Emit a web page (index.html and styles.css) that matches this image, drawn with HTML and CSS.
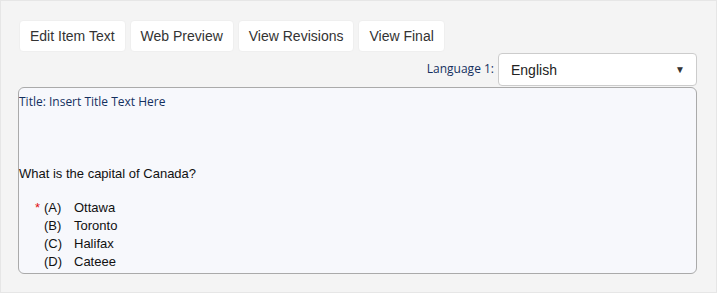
FILE: index.html
```html
<!DOCTYPE html>
<html lang="en">
<head>
    <meta charset="UTF-8">
    <title>Item Editor</title>
    <link rel="stylesheet" href="styles.css">
</head>
<body>
    <div class="page">
        <div class="tabs">
            <button class="tab">Edit Item Text</button>
            <button class="tab">Web Preview</button>
            <button class="tab">View Revisions</button>
            <button class="tab">View Final</button>
        </div>

        <div class="lang-row">
            <span class="lang-label">Language 1:</span>
            <div class="select">
                <span>English</span>
                <span class="arrow">&#9660;</span>
            </div>
        </div>

        <div class="item-box">
            <div class="item-title">Title: Insert Title Text Here</div>
            <div class="question">What is the capital of Canada?</div>
            <div class="options">
                <span class="key">*</span><span class="letter">(A)</span><span>Ottawa</span>
                <span></span><span class="letter">(B)</span><span>Toronto</span>
                <span></span><span class="letter">(C)</span><span>Halifax</span>
                <span></span><span class="letter">(D)</span><span>Cateee</span>
            </div>
        </div>
    </div>
</body>
</html>
```

FILE: styles.css
```css
body {
    margin: 0;
    font-family: 'Liberation Sans', Arial, sans-serif;
    color: #222;
}
.page {
    box-sizing: border-box;
    height: 293px;
    background: #f4f4f4;
    border: 1px solid #e6e6e6;
    padding: 19px 19px 0 17px;
}
.tabs {
    display: flex;
    gap: 4px;
    margin-left: 1px;
}
.tab {
    height: 32px;
    background: #fff;
    border: 1px solid #efefef;
    border-radius: 4px;
    padding: 0 10px;
    font-family: 'Liberation Sans', Arial, sans-serif;
    font-size: 14px;
    color: #333;
}
.lang-row {
    display: flex;
    justify-content: flex-end;
    align-items: center;
    gap: 4px;
    margin-top: 1px;
}
.lang-label {
    font-family: 'Open Sans', sans-serif;
    font-size: 12px;
    color: #14305f;
    margin-top: -2px;
}
.select {
    box-sizing: border-box;
    width: 199px;
    height: 33px;
    background: #fff;
    border: 1px solid #ccc;
    border-radius: 4px;
    display: flex;
    align-items: center;
    justify-content: space-between;
    padding: 0 11px 0 12px;
    font-size: 14px;
    color: #222;
}
.arrow {
    font-size: 10px;
    color: #333;
}
.item-box {
    box-sizing: border-box;
    height: 187px;
    margin-top: 1px;
    background: #f7f8fc;
    border: 1px solid #aaa;
    border-radius: 6px;
    padding: 6px 0 0 0;
    font-size: 13px;
    color: #111;
}
.item-title {
    font-family: 'Open Sans', sans-serif;
    font-size: 12px;
    line-height: 16px;
    color: #14305f;
}
.question {
    margin-top: 55px;
    line-height: 18px;
    font-size: 13px;
}
.options {
    display: grid;
    grid-template-columns: 25px 30px auto;
    line-height: 18px;
    margin-top: 16px;
}
.key {
    color: #e01010;
    text-align: right;
    padding-right: 4px;
}
```
